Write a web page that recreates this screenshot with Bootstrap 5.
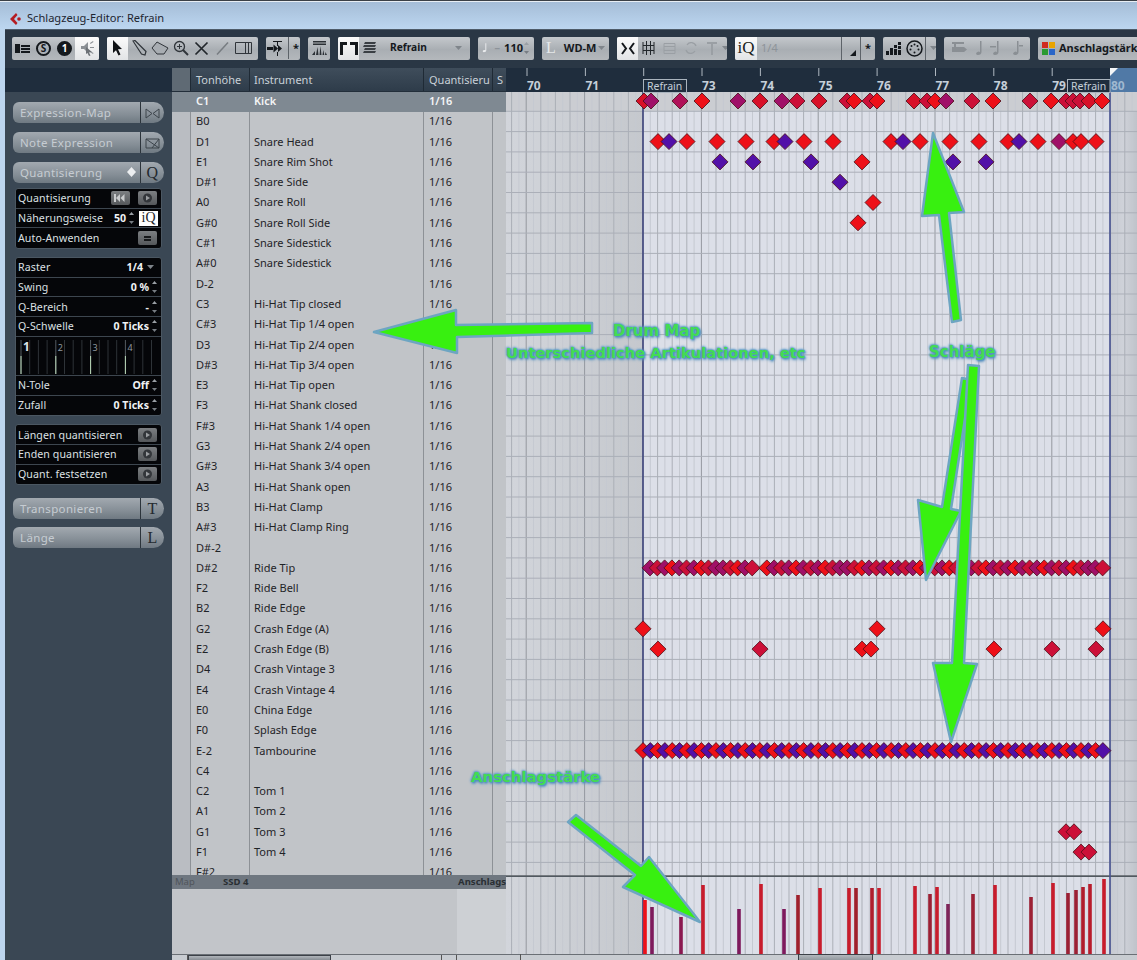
<!DOCTYPE html>
<html lang="de">
<head>
<meta charset="utf-8">
<title>Schlagzeug-Editor: Refrain</title>
<link href="https://cdn.jsdelivr.net/npm/bootstrap@5.3.0/dist/css/bootstrap.min.css" rel="stylesheet">
<style>
html,body{margin:0;height:960px;overflow:hidden}
body{background:#bcd5ee;font-family:"Noto Sans","Liberation Sans",sans-serif;font-size:11px;color:#1c2024}
.shot{width:1137px;height:960px;position:relative;overflow:hidden}
.titlebar{height:29px;background:linear-gradient(#a4bcd6,#bcd6f0);border-top:1px solid #3b4046;box-shadow:inset 0 1px 0 #e8eef4;padding-left:9px;padding-top:7px;font-size:11.1px;color:#1d2530;gap:5px}
.win{margin-left:5px;background:#3a4754}
.tools{height:39px;background:#2a3745;border-top:1px solid #4e5c6a;padding-left:7px;padding-bottom:2px;gap:8px;overflow:hidden}
.tg{height:23px;background:linear-gradient(#c4c8cc,#a9aeb3 55%,#b4b8bc);border-radius:2px;flex:none;color:#15191d;font-weight:700;font-size:11px;overflow:hidden}
.w1{width:87px}.w2{width:151px}.w3{width:34px}.w4{width:22px}.w5{width:132px}.w6{width:56px}.w7{width:67px}.w8{width:110px}.w9{width:140px}.w10{width:53px}.w11{width:86px}.w12{width:110px}
.cell{width:21px;height:23px;flex:none}
.cell svg{display:block}
.on{background:linear-gradient(#fbfbfb,#e2e4e6)}
.dis{color:#8d9399}
.sepl{border-left:1px solid #5d6369}
.ring{width:15px;height:15px;border-radius:50%;border:2px solid #14181c;font-size:10px;line-height:11px;text-align:center;color:#14181c;font-weight:700}
.ring.full{background:#14181c;color:#fff}
.serif{font-family:"Liberation Serif",serif;font-weight:400}
.iq{font-size:17px;color:#1a1d20;width:22px;height:23px;line-height:22px;text-align:center}
.rf{font-size:10.2px;margin-left:10px}
.dd{flex:none}
.tl{color:#e6e8ea;font-size:16px}
.main{height:892px}
.side{width:167px;flex:none;background:#3a4754}
.sidetop{height:24px;background:#1f2d3d}
.pills{padding:10px 8px 0 8px}
.pill{display:flex;width:151px;height:21px;margin-bottom:9px}
.pill .btn{border:0;padding:0;font-size:11.5px;letter-spacing:.35px;color:#c6ccd2;background:linear-gradient(#a2a9b0,#858e96 60%,#6f7982);border-radius:6px 0 0 6px;text-align:left;padding-left:7px;flex:1 1 auto;line-height:21px;height:21px;--bs-btn-active-bg:#888}
.pill .endb{flex:0 0 24px;padding:0;text-align:center;border-left:1px solid #2c343b;border-radius:0 11px 11px 0;color:#23292f;font-family:"Liberation Serif",serif;font-size:16px;line-height:20px}
.qbox{margin:-4px 0 0 2px;width:147px;background:#050609;border:1px solid #4b5762;border-radius:3px;color:#dde1e4;font-size:11px}
.qbox .list-group-item{background:transparent;border:0;border-bottom:1px solid #3d464f;color:#dde1e4;padding:0 3px 0 2px;height:19.7px;line-height:18px;border-radius:0;display:flex;align-items:center;font-size:10.6px;letter-spacing:.1px;white-space:nowrap}
.qbox .list-group-item:last-child{border-bottom:0}
.qbox.sp10{margin-top:8px}
.qiq{width:19px;height:15px;font-size:14px;line-height:14px;letter-spacing:0;flex:none}
.val{margin-left:auto;font-weight:700;color:#f0f2f4;letter-spacing:0}
.stp{width:7px;height:14px;flex:none;margin-left:2px}
.plb{width:19px;height:14px;background:linear-gradient(#7c7f82,#55585b);border-radius:2px;flex:none;margin-left:auto;margin-right:1px}
.plb svg{display:block}
.qbox .qgraph{height:39px;padding:0;border-bottom:1px solid #3d464f}
.qgraph svg{display:block}
.pill.gapb{margin-top:13px;margin-bottom:8px}
.listcol{width:334px;flex:none;background:#c1c4c8}
.lhead{height:24px;background:linear-gradient(#3f4d5b,#2e3c4a);color:#c9d1d8;flex:none;border-bottom:1px solid #222e3a}
.c0{width:18px;flex:none;background:#5f6a74}
.c1{width:59px;flex:none;padding-left:5px;border-left:1px solid #1f2a35}
.c2{width:174px;flex:none;padding-left:4px;border-left:1px solid #1f2a35}
.c3{width:69px;flex:none;padding-left:5px;border-left:1px solid #1f2a35;overflow:hidden;white-space:nowrap}
.c4{flex:1 1 auto;padding-left:4px;border-left:1px solid #1f2a35;overflow:hidden}
.lhead>div{height:23px;line-height:23px}
.lrows{height:783px;overflow:hidden;flex:none}
.drow{height:20.3px;line-height:18.5px;color:#1f2327}
.drow>div{height:20.3px}
.drow .c0{background:#babdc2}
.drow .c1,.drow .c2,.drow .c3,.drow .c4{border-left-color:#8d9196}
.drow.sel{background:#7f8992;color:#f4f5f6;font-weight:600}
.drow.sel .c0{background:#7f8992}
.drow.sel .c1,.drow.sel .c2,.drow.sel .c3,.drow.sel .c4{border-left-color:#7f8992}
.lanebar{height:14px;background:#6f7780;flex:none;font-size:9.5px;line-height:14px;color:#2a2f34;font-weight:700}
.lanebar .l1{width:51px;padding-left:3px;color:#4f555b;font-weight:400}
.lanebody{height:65px;flex:none}
.lb1{width:285px;background:#c2c5c9}
.lb2{flex:1 1 auto;background:#cdd0d4}
.sbar{height:6px;flex:none;background:#c8ccd1;border-top:1px solid #6a6f75}
.sb0{width:16px;border-right:1px solid #555}
.sbt{width:143px;background:linear-gradient(#b0b5ba,#888e94);border:1px solid #3c4148;border-bottom:0}
.sb1{width:110px}
.sb2{width:16px;border:solid #555;border-width:0 1px}
.gridw{width:631px;flex:none}
.gridw svg{display:block}
.gridw text{font-family:"Noto Sans","Liberation Sans",sans-serif}
.over{position:absolute;inset:0;pointer-events:none}
.gtext{position:absolute;font-family:"DejaVu Sans",sans-serif;font-weight:700;color:#43dc52;text-shadow:0 0 1px #4f8fc0,0 0 3px #4f8fc0,1px 1px 2px #4f8fc0,-1px -1px 2px #79aed0,1px 2px 3px #6d9cc0;white-space:nowrap;line-height:18px}
.t1{left:613px;top:322px;font-size:15px}
.t2{left:506px;top:344px;font-size:14.7px}
.t3{left:929px;top:343px;font-size:15px}
.t4{left:471px;top:768px;font-size:14.9px}
</style>
</head>
<body>
<svg width="0" height="0" class="position-absolute">
  <symbol id="stp" viewBox="0 0 7 14"><path d="M3.5 1 6 4H1z" fill="#9aa0a6"/><path d="M1 10h5l-2.500 3z" fill="#777d83"/></symbol>
  <symbol id="play" viewBox="0 0 19 14"><circle cx="9.500" cy="7" r="4.500" fill="#33363a"/><path d="M8 4.500 12 7 8 9.500z" fill="#9a9da0"/></symbol>
  <symbol id="ddn" viewBox="0 0 7 4"><path d="M0 0h7L3.500 4z" fill="#7f858b"/></symbol>
</svg>
<div class="shot">
  <div class="titlebar d-flex align-items-center">
    <svg width="13" height="14" viewBox="0 0 13 14"><path d="M7 1 1 7l6 6 1.500-2L5 7l3.500-4z" fill="#b51c22"/><circle cx="10" cy="7" r="1.800" fill="#b51c22"/></svg>
    <span>Schlagzeug-Editor: Refrain</span>
  </div>
  <div class="win">
    <div class="tools d-flex align-items-center">
      <div class="tg w1 d-flex">
        <div class="cell d-flex align-items-center justify-content-center"><svg width="15" height="11" viewBox="0 0 15 11"><path fill="#14181c" d="M0 1h5v9H0zM6 2h9v2H6zM6 5h9v2H6zM6 8h9v2H6z"/></svg></div>
        <div class="cell d-flex align-items-center justify-content-center"><div class="ring">S</div></div>
        <div class="cell d-flex align-items-center justify-content-center"><div class="ring full">1</div></div>
        <div class="cell on flex-grow-1 d-flex align-items-center justify-content-center"><svg width="16" height="17" viewBox="0 0 16 17"><path fill="#8a8f94" d="M2 6h3l4-4v11L5 9H2zM11 3l3-2 .5 1-3 2zM11 7h4v1h-4zM11 11l3.500 2-.5 1-3-2z"/><path fill="#6c7176" d="M7 7l6 5-3 .5 1.500 3-1.500.5-1.500-3L7 14z"/></svg></div>
      </div>
      <div class="tg w2 d-flex">
        <div class="cell on d-flex align-items-center justify-content-center"><svg width="11" height="16" viewBox="0 0 11 16"><path fill="#101316" d="M1 0l9 9-4 .3 2.500 5.200-2 1L4 10.200 1 13z"/></svg></div>
        <div class="cell d-flex align-items-center justify-content-center"><svg width="16" height="16" viewBox="0 0 16 16"><path fill="none" stroke="#30353a" stroke-width="1.200" d="M2 1l2-.5 11 11-1 3.500-3.500-1z"/></svg></div>
        <div class="cell d-flex align-items-center justify-content-center"><svg width="18" height="14" viewBox="0 0 18 14"><path fill="#a8adb2" stroke="#30353a" d="M1 7l5-6 11 6-4 6H6z"/></svg></div>
        <div class="cell d-flex align-items-center justify-content-center"><svg width="16" height="16" viewBox="0 0 16 16"><circle cx="6.500" cy="6.500" r="5" fill="none" stroke="#30353a" stroke-width="1.300"/><path stroke="#30353a" stroke-width="2" d="M10 10l5 5"/><path stroke="#30353a" d="M4 6.500h5M6.500 4v5"/></svg></div>
        <div class="cell d-flex align-items-center justify-content-center"><svg width="15" height="15" viewBox="0 0 15 15"><path stroke="#22272b" stroke-width="1.700" d="M1.500 1.500l12 12M13.500 1.500l-12 12"/></svg></div>
        <div class="cell d-flex align-items-center justify-content-center"><svg width="15" height="15" viewBox="0 0 15 15"><path stroke="#777c81" stroke-width="1.500" d="M13 1.500 2 13.500"/></svg></div>
        <div class="cell d-flex align-items-center justify-content-center"><svg width="17" height="14" viewBox="0 0 17 14"><path fill="none" stroke="#30353a" d="M.5 1.500h16v11H.5zM10.500 1.500v11M13.500 1.500v11"/></svg></div>
      </div>
      <div class="tg w3 d-flex">
        <div class="d-flex align-items-center justify-content-center w-100"><svg width="21" height="17" viewBox="0 0 21 17"><path fill="#14181c" d="M0 7h6v3H0zM6.500 4.500 11 8.500l-4.500 4zM11 5l4 3.500-4 3.500zM6 1h9v1H11v4h-1V2H6zM10 12h1v4h-1z"/></svg><span class="sepl ps-1 lh-lg">*</span></div>
      </div>
      <div class="tg w4 d-flex align-items-center justify-content-center"><svg width="17" height="17" viewBox="0 0 17 17"><path fill="#2b3035" d="M2 1h13v1.500H2zM2 3.500h13V5H2zM1 15l3-4v4zM5 15l1.500-8 1 8zM8.500 15l1-9 1 9zM11.500 15l.800-5 1 5zM14 15l.5-3 1.500 3z"/></svg></div>
      <div class="tg w5 d-flex align-items-center">
        <div class="cell on d-flex align-items-center justify-content-center"><svg width="18" height="13" viewBox="0 0 18 13"><path fill="#14181c" d="M0 0h7v3H3v10H0zM10 0h8v13h-3V3h-5z"/></svg></div>
        <div class="cell d-flex align-items-center justify-content-center"><svg width="14" height="12" viewBox="0 0 14 12"><path fill="#3a3f44" d="M2 0h11l-1 2H1zM1 3h12l-1 2H0zM2 6h11l-1 2H1zM1 9h12l-1 2H0z"/></svg></div>
        <span class="rf">Refrain</span><svg class="dd ms-auto me-2" width="7" height="4"><use href="#ddn"/></svg>
      </div>
      <div class="tg w6 d-flex align-items-center">
        <svg class="ms-1" width="13" height="16" viewBox="0 0 13 16"><path fill="#e8eaec" d="M5 1h1.500v10.500c0 2-1.500 3-3.500 3s-2.500-2-1-3 2.500-.5 3 0z"/></svg>
        <span class="dis ms-1">–</span><span class="ms-1">110</span>
        <svg class="stp ms-auto me-1"><use href="#stp"/></svg>
      </div>
      <div class="tg w7 d-flex align-items-center">
        <span class="serif ps-1 tl">L</span><span class="ms-2">WD-M</span><svg class="dd ms-auto me-1" width="7" height="4"><use href="#ddn"/></svg>
      </div>
      <div class="tg w8 d-flex align-items-center">
        <div class="cell on d-flex align-items-center justify-content-center"><svg width="14" height="13" viewBox="0 0 14 13"><path fill="none" stroke="#14181c" stroke-width="2" d="M1 1l4 5.500L1 12M13 1 9 6.500 13 12"/></svg></div>
        <div class="cell d-flex align-items-center justify-content-center"><svg width="13" height="14" viewBox="0 0 13 14"><path fill="none" stroke="#22272b" d="M1 1v12M12 1v12M4.500 0v14M8.500 0v14M1 4.500h11M1 9.500h11"/></svg></div>
        <div class="cell d-flex align-items-center justify-content-center"><svg width="13" height="13" viewBox="0 0 13 13"><path fill="none" stroke="#9a9fa4" d="M1 1.500h11v10H1zM1 4.500h11M1 8.500h11"/></svg></div>
        <div class="cell d-flex align-items-center justify-content-center"><svg width="14" height="12" viewBox="0 0 14 12"><path fill="none" stroke="#9a9fa4" stroke-width="1.300" d="M12 4a5 5 0 0 0-9-1M2 8a5 5 0 0 0 9 1"/></svg></div>
        <div class="cell d-flex align-items-center justify-content-center"><svg width="10" height="13" viewBox="0 0 10 13"><path fill="#9a9fa4" d="M0 0h10v2H6v11H4V2H0z"/></svg></div>
        <svg class="dd" width="7" height="4"><use href="#ddn"/></svg>
      </div>
      <div class="tg w9 d-flex align-items-center">
        <div class="iq on serif">iQ</div>
        <span class="dis ms-1 fw-normal">1/4</span>
        <div class="ms-auto sepl h-100 d-flex align-items-end pb-1 ps-2 pe-1"><svg width="6" height="6" viewBox="0 0 6 6"><path fill="#14181c" d="M6 0v6H0z"/></svg></div>
        <div class="sepl h-100 px-1 lh-lg">*</div>
      </div>
      <div class="tg w10 d-flex align-items-center">
        <div class="cell d-flex align-items-center justify-content-center"><svg width="15" height="14" viewBox="0 0 15 14"><path fill="#14181c" d="M0 10h3v4H0zM4 7h3v7H4zM8 4h3v3H8zM8 8h3v6H8zM12 1h3v3h-3zM12 5h3v3h-3zM12 9h3v5h-3z"/></svg></div>
        <div class="cell d-flex align-items-center justify-content-center"><svg width="17" height="17" viewBox="0 0 17 17"><circle cx="8.500" cy="8.500" r="7.500" fill="none" stroke="#14181c" stroke-width="1.500"/><g fill="#14181c"><circle cx="8.500" cy="12.500" r="1"/><circle cx="4.500" cy="9.500" r="1"/><circle cx="12.500" cy="9.500" r="1"/><circle cx="5.500" cy="6" r="1"/><circle cx="11.500" cy="6" r="1"/><circle cx="8.500" cy="4.500" r="1"/></g></svg></div>
        <div class="sepl h-100 ms-auto d-flex align-items-center px-0"><svg class="dd ms-1 me-1" width="7" height="4"><use href="#ddn"/></svg></div>
      </div>
      <div class="tg w11 d-flex align-items-center justify-content-around px-1">
        <svg width="17" height="14" viewBox="0 0 17 14"><path fill="#8a8f94" d="M1 1h12v2H1zM1 6h12l3 2.500L13 11H1zM3 3h2v3H3z"/></svg>
        <svg width="10" height="15" viewBox="0 0 10 15"><path fill="#8a8f94" d="M6 0h1.500v11c0 2-1.500 3-3.500 3s-2.500-1.800-1-2.800 2.500-.6 3 0z"/></svg>
        <svg width="14" height="15" viewBox="0 0 14 15"><path fill="#8a8f94" d="M8 0h1.500v11c0 2-1.500 3-3.500 3s-2.500-1.800-1-2.800 2.500-.6 3 0zM1 5h6v1.500H1z"/></svg>
        <svg width="14" height="15" viewBox="0 0 14 15"><path fill="#8a8f94" d="M8 0h1.500v11c0 2-1.500 3-3.500 3s-2.500-1.800-1-2.800 2.500-.6 3 0zM10 4h4v1.500h-4z"/></svg>
      </div>
      <div class="tg w12 d-flex align-items-center ps-1">
        <svg class="flex-none me-1" width="13" height="13" viewBox="0 0 13 13"><path fill="#d02a20" d="M0 0h6v6H0z"/><path fill="#e9a400" d="M7 0h6v6H7z"/><path fill="#2a9a30" d="M0 7h6v6H0z"/><path fill="#2a66c8" d="M7 7h6v6H7z"/></svg><span class="text-nowrap">Anschlagstärke</span>
      </div>
    </div>
    <div class="main d-flex">
      <div class="side d-flex flex-column">
        <div class="sidetop"></div>
        <div class="pills">
          <div class="pill btn-group"><button class="btn" type="button">Expression-Map</button><button class="btn endb" type="button"><svg width="15" height="11" viewBox="0 0 15 11"><path fill="none" stroke="#3c444b" d="M1 1v9l6-4.500zM14 1v9L8 5.500z"/></svg></button></div>
          <div class="pill btn-group"><button class="btn" type="button">Note Expression</button><button class="btn endb" type="button"><svg width="15" height="11" viewBox="0 0 15 11"><path fill="none" stroke="#3c444b" d="M1 1h13v9H1zM1 1l13 9M14 1 7 10"/></svg></button></div>
          <div class="pill btn-group"><button class="btn d-flex" type="button">Quantisierung<svg class="ms-auto me-1 mt-1" width="11" height="12" viewBox="0 0 11 12"><path d="M5.500 1l4.500 5-4.500 5L1 6z" fill="#eceef0"/></svg></button><button class="btn endb" type="button">Q</button></div>
          <div class="qbox list-group">
            <div class="list-group-item">Quantisierung<div class="plb ms-auto me-2 d-flex align-items-center justify-content-center"><svg width="13" height="8" viewBox="0 0 13 8"><path fill="#c9cbcd" d="M0 0h2v8H0zM2 4l4-4v8zM6.500 4l4-4v8z"/></svg></div><div class="plb ms-0"><svg width="19" height="14"><use href="#play"/></svg></div></div>
            <div class="list-group-item">Näherungsweise<span class="val">50</span><svg class="stp"><use href="#stp"/></svg><div class="serif ms-1 bg-white text-dark text-center qiq">iQ</div></div>
            <div class="list-group-item">Auto-Anwenden<div class="plb d-flex align-items-center justify-content-center"><svg width="7" height="5" viewBox="0 0 7 5"><path fill="#17191b" d="M0 0h7v2H0zM0 3h7v2H0z"/></svg></div></div>
          </div>
          <div class="qbox list-group sp10">
            <div class="list-group-item">Raster<span class="val">1/4</span><svg class="dd ms-1 me-1" width="7" height="4"><use href="#ddn"/></svg></div>
            <div class="list-group-item">Swing<span class="val">0 %</span><svg class="stp"><use href="#stp"/></svg></div>
            <div class="list-group-item">Q-Bereich<span class="val">-</span><svg class="stp"><use href="#stp"/></svg></div>
            <div class="list-group-item">Q-Schwelle<span class="val">0 Ticks</span><svg class="stp"><use href="#stp"/></svg></div>
            <div class="list-group-item qgraph"><svg id="qg" width="145" height="38" viewBox="0 0 145 38"></svg></div>
            <div class="list-group-item">N-Tole<span class="val">Off</span><svg class="stp"><use href="#stp"/></svg></div>
            <div class="list-group-item">Zufall<span class="val">0 Ticks</span><svg class="stp"><use href="#stp"/></svg></div>
          </div>
          <div class="qbox list-group sp10">
            <div class="list-group-item">Längen quantisieren<div class="plb"><svg width="19" height="14"><use href="#play"/></svg></div></div>
            <div class="list-group-item">Enden quantisieren<div class="plb"><svg width="19" height="14"><use href="#play"/></svg></div></div>
            <div class="list-group-item">Quant. festsetzen<div class="plb"><svg width="19" height="14"><use href="#play"/></svg></div></div>
          </div>
          <div class="pill btn-group gapb"><button class="btn" type="button">Transponieren</button><button class="btn endb" type="button">T</button></div>
          <div class="pill btn-group"><button class="btn" type="button">Länge</button><button class="btn endb" type="button">L</button></div>
        </div>
      </div>
      <div class="listcol d-flex flex-column">
        <div class="lhead d-flex"><div class="c0"></div><div class="c1">Tonhöhe</div><div class="c2">Instrument</div><div class="c3">Quantisieru</div><div class="c4">S</div></div>
        <div class="lrows">
          <div class="drow sel d-flex"><div class="c0"></div><div class="c1">C1</div><div class="c2">Kick</div><div class="c3">1/16</div><div class="c4"></div></div>
          <div class="drow d-flex"><div class="c0"></div><div class="c1">B0</div><div class="c2"></div><div class="c3">1/16</div><div class="c4"></div></div>
          <div class="drow d-flex"><div class="c0"></div><div class="c1">D1</div><div class="c2">Snare Head</div><div class="c3">1/16</div><div class="c4"></div></div>
          <div class="drow d-flex"><div class="c0"></div><div class="c1">E1</div><div class="c2">Snare Rim Shot</div><div class="c3">1/16</div><div class="c4"></div></div>
          <div class="drow d-flex"><div class="c0"></div><div class="c1">D#1</div><div class="c2">Snare Side</div><div class="c3">1/16</div><div class="c4"></div></div>
          <div class="drow d-flex"><div class="c0"></div><div class="c1">A0</div><div class="c2">Snare Roll</div><div class="c3">1/16</div><div class="c4"></div></div>
          <div class="drow d-flex"><div class="c0"></div><div class="c1">G#0</div><div class="c2">Snare Roll Side</div><div class="c3">1/16</div><div class="c4"></div></div>
          <div class="drow d-flex"><div class="c0"></div><div class="c1">C#1</div><div class="c2">Snare Sidestick</div><div class="c3">1/16</div><div class="c4"></div></div>
          <div class="drow d-flex"><div class="c0"></div><div class="c1">A#0</div><div class="c2">Snare Sidestick</div><div class="c3">1/16</div><div class="c4"></div></div>
          <div class="drow d-flex"><div class="c0"></div><div class="c1">D-2</div><div class="c2"></div><div class="c3">1/16</div><div class="c4"></div></div>
          <div class="drow d-flex"><div class="c0"></div><div class="c1">C3</div><div class="c2">Hi-Hat Tip closed</div><div class="c3">1/16</div><div class="c4"></div></div>
          <div class="drow d-flex"><div class="c0"></div><div class="c1">C#3</div><div class="c2">Hi-Hat Tip 1/4 open</div><div class="c3">1/16</div><div class="c4"></div></div>
          <div class="drow d-flex"><div class="c0"></div><div class="c1">D3</div><div class="c2">Hi-Hat Tip 2/4 open</div><div class="c3">1/16</div><div class="c4"></div></div>
          <div class="drow d-flex"><div class="c0"></div><div class="c1">D#3</div><div class="c2">Hi-Hat Tip 3/4 open</div><div class="c3">1/16</div><div class="c4"></div></div>
          <div class="drow d-flex"><div class="c0"></div><div class="c1">E3</div><div class="c2">Hi-Hat Tip open</div><div class="c3">1/16</div><div class="c4"></div></div>
          <div class="drow d-flex"><div class="c0"></div><div class="c1">F3</div><div class="c2">Hi-Hat Shank closed</div><div class="c3">1/16</div><div class="c4"></div></div>
          <div class="drow d-flex"><div class="c0"></div><div class="c1">F#3</div><div class="c2">Hi-Hat Shank 1/4 open</div><div class="c3">1/16</div><div class="c4"></div></div>
          <div class="drow d-flex"><div class="c0"></div><div class="c1">G3</div><div class="c2">Hi-Hat Shank 2/4 open</div><div class="c3">1/16</div><div class="c4"></div></div>
          <div class="drow d-flex"><div class="c0"></div><div class="c1">G#3</div><div class="c2">Hi-Hat Shank 3/4 open</div><div class="c3">1/16</div><div class="c4"></div></div>
          <div class="drow d-flex"><div class="c0"></div><div class="c1">A3</div><div class="c2">Hi-Hat Shank open</div><div class="c3">1/16</div><div class="c4"></div></div>
          <div class="drow d-flex"><div class="c0"></div><div class="c1">B3</div><div class="c2">Hi-Hat Clamp</div><div class="c3">1/16</div><div class="c4"></div></div>
          <div class="drow d-flex"><div class="c0"></div><div class="c1">A#3</div><div class="c2">Hi-Hat Clamp Ring</div><div class="c3">1/16</div><div class="c4"></div></div>
          <div class="drow d-flex"><div class="c0"></div><div class="c1">D#-2</div><div class="c2"></div><div class="c3">1/16</div><div class="c4"></div></div>
          <div class="drow d-flex"><div class="c0"></div><div class="c1">D#2</div><div class="c2">Ride Tip</div><div class="c3">1/16</div><div class="c4"></div></div>
          <div class="drow d-flex"><div class="c0"></div><div class="c1">F2</div><div class="c2">Ride Bell</div><div class="c3">1/16</div><div class="c4"></div></div>
          <div class="drow d-flex"><div class="c0"></div><div class="c1">B2</div><div class="c2">Ride Edge</div><div class="c3">1/16</div><div class="c4"></div></div>
          <div class="drow d-flex"><div class="c0"></div><div class="c1">G2</div><div class="c2">Crash Edge (A)</div><div class="c3">1/16</div><div class="c4"></div></div>
          <div class="drow d-flex"><div class="c0"></div><div class="c1">E2</div><div class="c2">Crash Edge (B)</div><div class="c3">1/16</div><div class="c4"></div></div>
          <div class="drow d-flex"><div class="c0"></div><div class="c1">D4</div><div class="c2">Crash Vintage 3</div><div class="c3">1/16</div><div class="c4"></div></div>
          <div class="drow d-flex"><div class="c0"></div><div class="c1">E4</div><div class="c2">Crash Vintage 4</div><div class="c3">1/16</div><div class="c4"></div></div>
          <div class="drow d-flex"><div class="c0"></div><div class="c1">E0</div><div class="c2">China Edge</div><div class="c3">1/16</div><div class="c4"></div></div>
          <div class="drow d-flex"><div class="c0"></div><div class="c1">F0</div><div class="c2">Splash Edge</div><div class="c3">1/16</div><div class="c4"></div></div>
          <div class="drow d-flex"><div class="c0"></div><div class="c1">E-2</div><div class="c2">Tambourine</div><div class="c3">1/16</div><div class="c4"></div></div>
          <div class="drow d-flex"><div class="c0"></div><div class="c1">C4</div><div class="c2"></div><div class="c3">1/16</div><div class="c4"></div></div>
          <div class="drow d-flex"><div class="c0"></div><div class="c1">C2</div><div class="c2">Tom 1</div><div class="c3">1/16</div><div class="c4"></div></div>
          <div class="drow d-flex"><div class="c0"></div><div class="c1">A1</div><div class="c2">Tom 2</div><div class="c3">1/16</div><div class="c4"></div></div>
          <div class="drow d-flex"><div class="c0"></div><div class="c1">G1</div><div class="c2">Tom 3</div><div class="c3">1/16</div><div class="c4"></div></div>
          <div class="drow d-flex"><div class="c0"></div><div class="c1">F1</div><div class="c2">Tom 4</div><div class="c3">1/16</div><div class="c4"></div></div>
          <div class="drow d-flex"><div class="c0"></div><div class="c1">F#2</div><div class="c2"></div><div class="c3">1/16</div><div class="c4"></div></div>
        </div>
        <div class="lanebar d-flex"><div class="l1">Map</div><div>SSD 4</div><div class="ms-auto">Anschlags</div></div>
        <div class="lanebody d-flex"><div class="lb1"></div><div class="lb2"></div></div>
        <div class="sbar d-flex"><div class="sb0"></div><div class="sbt"></div><div class="sb1"></div><div class="sb2"></div></div>
      </div>
      <div class="gridw"><svg id="grid" width="631" height="892" viewBox="506 68 631 892"></svg></div>
    </div>
  </div>
  <svg class="over" width="1137" height="960" viewBox="0 0 1137 960">
    <g fill="#38f010" stroke="#6da5c2" stroke-width="2.500" stroke-linejoin="round">
      <path d="M374 332 456 310 456 325 592 323 592 333 457 337 457 353z"/>
      <path d="M933 133 964 212 949 213 961 320 952 322 939 215 922 216z"/>
      <path d="M926 580 918 500 942 507 962 378 971 380 951 509 961 511z"/>
      <path d="M951 742 933 663 952 663 968 365 979 366 964 663 977 664z"/>
      <path d="M700 922 623 887 635 875 568 822 576 815 641 866 649 857z"/>
    </g>
  </svg>
  <div class="gtext t1">Drum Map</div>
  <div class="gtext t2">Unterschiedliche Artikulationen, etc</div>
  <div class="gtext t3">Schläge</div>
  <div class="gtext t4">Anschlagstärke</div>
</div>
<script>
(function(){
  var RED='#ee1018',CRI='#cc1038',DRD='#d81028',MAG='#a01068',PUR='#5210a8';
  var s='';
  function rect(x,y,w,h,f){s+='<rect x="'+x+'" y="'+y+'" width="'+w+'" height="'+h+'" fill="'+f+'"/>';}
  function line(x1,y1,x2,y2,c,w){s+='<line x1="'+x1+'" y1="'+y1+'" x2="'+x2+'" y2="'+y2+'" stroke="'+c+'" stroke-width="'+(w||1)+'"/>';}
  function txt(x,y,t,f,fs,fw){s+='<text x="'+x+'" y="'+y+'" fill="'+f+'" font-size="'+fs+'" font-weight="'+(fw||400)+'">'+t+'</text>';}
  s+='<defs><linearGradient id="lg" x1="0" x2="1" y1="0" y2="0"><stop offset="0" stop-color="#d2d5db"/><stop offset="1" stop-color="#c5c8cd"/></linearGradient><linearGradient id="rg" x1="0" x2="1" y1="0" y2="0"><stop offset="0" stop-color="#c6cad1"/><stop offset=".5" stop-color="#cfd2d9"/><stop offset="1" stop-color="#bfc3ca"/></linearGradient><linearGradient id="th" x1="0" x2="0" y1="0" y2="1"><stop offset="0" stop-color="#b5babf"/><stop offset="1" stop-color="#8a9096"/></linearGradient></defs>';
  rect(506,92,137,784,'url(#lg)');
  rect(643,92,467,784,'#dcdfe8');
  rect(1110,92,27,784,'url(#rg)');
  rect(506,877,137,77,'url(#lg)');
  rect(643,877,467,77,'#dcdfe8');
  rect(1110,877,27,77,'url(#rg)');
  rect(506,92,631,19,'#cbcdd2');
  var st=7.3;
  for(var k=-19;k*st+643<1137;k++){
    var x=+(643+k*st).toFixed(2);
    var c=(k%8===0)?'#94989f':(k%2===0?'#abafb7':'#c5c9d1');
    line(x,92,x,876,c);line(x,877,x,954,c);
  }
  for(var i=0;i<38;i++){var y=+(111.3+20.3*i).toFixed(1);line(506,y,1137,y,'#abafb8');}
  line(506,876,1137,876,'#5a5f65',1.5);
  line(643,92,643,954,'#182068',1.2);
  line(1110,92,1110,954,'#4a5594',1.6);
  /* ruler */
  rect(506,68,631,24,'#1f2d3d');
  rect(1110,68,27,24,'#5079a6');
  s+='<path d="M1110 68h8l-8 8z" fill="#f4f6f8"/>';
  var bars=[70,71,null,73,74,75,76,77,78,79];
  for(var b=0;b<10;b++){
    var bx=+(527+b*58.35).toFixed(1);
    line(bx,68,bx,76,'#aeb7c0');
    if(bars[b])txt(bx,90,bars[b],'#c5cfd9',12,700);
  }
  txt(1111,90,'80','#9fb8d0',12,700);
  s+='<rect x="643.500" y="79.500" width="43" height="13" fill="#1f2d3d" stroke="#aab4be"/>';
  txt(647,90,'Refrain','#c5cfd9',10.5);
  s+='<rect x="1067.500" y="79.500" width="42.500" height="13" fill="#1f2d3d" stroke="#aab4be"/>';
  txt(1071,90,'Refrain','#c5cfd9',10.5);
  /* notes */
  var rows={
   0:[[644,DRD],[651,MAG],[680,'#b01058'],[702,RED],[738,MAG],[760,DRD],[782,MAG],[797,CRI],[819,DRD],[847,CRI],[854,RED],[870,CRI],[877,RED],[914,DRD],[927,CRI],[935,RED],[946,MAG],[972,CRI],[993,RED],[1030,CRI],[1051,RED],[1066,CRI],[1073,CRI],[1080,CRI],[1089,DRD],[1102,RED]],
   2:[[658,RED],[669,PUR],[687,RED],[717,RED],[746,RED],[774,RED],[785,PUR],[804,RED],[833,RED],[891,RED],[903,PUR],[920,RED],[950,RED],[979,RED],[1008,RED],[1019,PUR],[1038,RED],[1059,MAG],[1073,RED],[1081,RED],[1096,RED]],
   3:[[720,PUR],[753,PUR],[811,PUR],[862,RED],[953,PUR],[986,PUR]],
   4:[[840,PUR]],5:[[873,RED]],6:[[858,RED]],
   26:[[643,RED],[877,RED],[1103,RED]],
   27:[[658,RED],[760,CRI],[862,RED],[871,RED],[994,RED],[1052,CRI],[1096,CRI]],
   36:[[1066,CRI],[1074,CRI]],37:[[1081,CRI],[1089,CRI]]
  };
  var rc=[MAG,CRI,MAG,RED,MAG,CRI,MAG,RED,CRI,MAG,MAG,CRI,RED,MAG,CRI,MAG,RED];
  rows[23]=[];
  for(var n=0;n<63;n++){var rx=+(650+n*7.3).toFixed(1);if(rx>757&&rx<762)continue;rows[23].push([rx,rc[n%rc.length]]);}
  rows[32]=[];
  for(var m=0;m<64;m++){rows[32].push([+(643+m*7.3).toFixed(1),m%2?PUR:RED]);}
  Object.keys(rows).forEach(function(r){
    var cy=101+20.3*r;
    rows[r].forEach(function(d){
      s+='<path d="M'+d[0]+' '+(cy-8).toFixed(1)+'l8 8-8 8-8-8z" fill="'+d[1]+'" stroke="#4a0c14" stroke-width=".8"/>';
    });
  });
  /* velocity */
  var vel=[[645,900,RED],[652,907,'#7e1a5c'],[681,917,'#8a1850'],[703,885,'#c81c2c'],[739,909,'#7e1a5c'],[761,884,'#c81c2c'],[784,909,'#7e1a5c'],[798,895,'#a0202c'],[820,888,'#c81c2c'],[849,888,'#c81c2c'],[856,888,'#a0202c'],[872,888,'#b01c2c'],[879,888,'#c81c2c'],[915,886,'#c81c2c'],[930,894,'#9c2034'],[937,887,'#c81c2c'],[948,904,'#7e2458'],[973,894,'#9c2034'],[995,885,'#c81c2c'],[1031,897,'#9c2034'],[1053,883,'#c81c2c'],[1068,893,'#9c2034'],[1076,890,'#9c2034'],[1083,887,'#b01c2c'],[1090,884,'#b81c2c'],[1104,879,'#c81c2c']];
  vel.forEach(function(v){rect(v[0]-1.8,v[1],3.6,954-v[1],v[2]);});
  /* scrollbar */
  rect(506,954,631,6,'#c8ccd1');
  line(506,954.5,1137,954.5,'#6a6f75');
  line(520.5,954,520.5,960,'#555');
  s+='<rect x="798.500" y="954.500" width="74" height="7" fill="url(#th)" stroke="#3c4148"/>';
  document.getElementById('grid').innerHTML=s;
  /* quantize graph */
  var q='';
  for(var t=0;t<16;t++){var gx=+(5+t*8.7).toFixed(1);q+='<line x1="'+gx+'" y1="3" x2="'+gx+'" y2="37" stroke="'+(t%4===0?'#555c62':'#2e3338')+'"/>';
    if(t%4===0){q+='<line x1="'+gx+'" y1="19" x2="'+gx+'" y2="37" stroke="#b9d8b8"/><text x="'+(gx+2)+'" y="14" fill="'+(t?'#8f989f':'#dfe3e6')+'" font-size="'+(t?9:12)+'" font-family="Noto Sans,sans-serif" font-weight="'+(t?400:700)+'">'+(t/4+1)+'</text>';}
  }
  document.getElementById('qg').innerHTML=q;
})();
</script>
<script src="https://cdn.jsdelivr.net/npm/bootstrap@5.3.0/dist/js/bootstrap.bundle.min.js"></script>
</body>
</html>
